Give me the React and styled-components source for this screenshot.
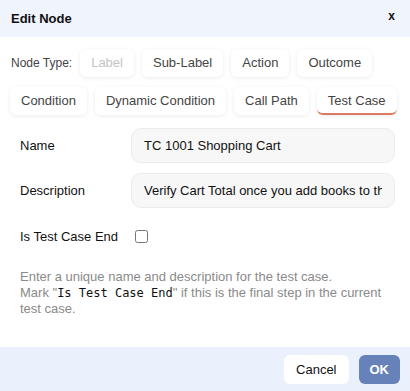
import { useState } from "react";
import styled, { createGlobalStyle } from "styled-components";

const GlobalStyle = createGlobalStyle`
  html, body {
    margin: 0;
    padding: 0;
    background: #ffffff;
  }
  body {
    font-family: "Liberation Sans", Arial, sans-serif;
    color: #222;
  }
`;

const NODE_TYPES = [
  "Label",
  "Sub-Label",
  "Action",
  "Outcome",
  "Condition",
  "Dynamic Condition",
  "Call Path",
  "Test Case",
];

export default function App() {
  const [type, setType] = useState("Test Case");
  const [name, setName] = useState("TC 1001 Shopping Cart");
  const [desc, setDesc] = useState("Verify Cart Total once you add books to the cart");
  const [isEnd, setIsEnd] = useState(false);

  return (
    <>
      <GlobalStyle />
      <Dialog>
        <Header>
          <Title>Edit Node</Title>
          <CloseButton>x</CloseButton>
        </Header>
        <Body>
          <TypeBar>
            <TypeLabel>Node Type:</TypeLabel>
            {NODE_TYPES.map((t) => (
              <TypeButton
                key={t}
                $active={type === t}
                $disabled={t === "Label"}
                onClick={() => t !== "Label" && setType(t)}
              >
                {t}
              </TypeButton>
            ))}
          </TypeBar>
          <Form>
            <FieldRow>
              <FieldLabel>Name</FieldLabel>
              <TextInput value={name} onChange={(e) => setName(e.target.value)} />
            </FieldRow>
            <FieldRow>
              <FieldLabel>Description</FieldLabel>
              <TextInput value={desc} onChange={(e) => setDesc(e.target.value)} />
            </FieldRow>
            <CheckRow>
              <FieldLabel $auto>Is Test Case End</FieldLabel>
              <CheckBox checked={isEnd} onChange={() => setIsEnd(!isEnd)} />
            </CheckRow>
          </Form>
          <Help>
            Enter a unique name and description for the test case.
            <br />
            Mark "<Code>Is Test Case End</Code>" if this is the final step in the current test case.
          </Help>
        </Body>
        <Footer>
          <CancelButton>Cancel</CancelButton>
          <OkButton>OK</OkButton>
        </Footer>
      </Dialog>
    </>
  );
}

const Dialog = styled.div`
  width: 410px;
  height: 391px;
  display: flex;
  flex-direction: column;
  background: #fff;
  overflow: hidden;
`;

const Header = styled.div`
  height: 37px;
  flex: none;
  display: flex;
  align-items: center;
  justify-content: space-between;
  padding: 0 15px 0 11px;
  background: #f0f5fd;
  box-sizing: border-box;
`;

const Title = styled.h2`
  margin: 0;
  font-size: 13px;
  font-weight: 700;
  color: #111;
`;

const CloseButton = styled.button`
  border: none;
  background: none;
  padding: 0;
  margin-top: -6px;
  font-family: inherit;
  font-size: 12px;
  font-weight: 700;
  color: #111;
  cursor: pointer;
`;

const Body = styled.div`
  flex: 1;
  padding: 12px 10px 0 10px;
`;

const TypeBar = styled.div`
  display: flex;
  flex-wrap: wrap;
  align-items: center;
  gap: 10px 8px;
`;

const TypeLabel = styled.span`
  font-size: 12px;
  color: #444;
  padding-left: 1px;
`;

const TypeButton = styled.button`
  height: 28px;
  padding: 0 11px;
  border: none;
  border-radius: 6px;
  background: #fff;
  font-family: inherit;
  font-size: 13px;
  color: ${(p) => (p.$disabled ? "#c4c4c4" : "#444")};
  box-shadow: 0 1px 4px rgba(0, 0, 0, 0.08);
  border-bottom: 2px solid ${(p) => (p.$active ? "#dd7a62" : "transparent")};
  cursor: ${(p) => (p.$disabled ? "default" : "pointer")};
`;

const Form = styled.div`
  display: flex;
  flex-direction: column;
  gap: 10px;
  margin-top: 13px;
  padding: 0 5px 0 10px;
`;

const FieldRow = styled.div`
  display: flex;
  align-items: center;
`;

const CheckRow = styled.div`
  display: flex;
  align-items: center;
  margin-top: 11px;
`;

const FieldLabel = styled.label`
  width: ${(p) => (p.$auto ? "auto" : "111px")};
  flex: none;
  font-size: 13px;
  color: #111;
`;

const TextInput = styled.input`
  flex: 1;
  min-width: 0;
  height: 35px;
  box-sizing: border-box;
  padding: 0 12px;
  border: 1px solid #ececec;
  border-radius: 10px;
  background: #f7f7f7;
  font-family: inherit;
  font-size: 13px;
  color: #111;
  outline: none;
`;

const CheckBox = styled.input.attrs({ type: "checkbox" })`
  width: 13px;
  height: 13px;
  margin: 0 0 0 17px;
`;

const Help = styled.p`
  margin: 25px 10px 0 10px;
  font-size: 13px;
  line-height: 16px;
  color: #8a8a8a;
`;

const Code = styled.code`
  font-family: "DejaVu Sans Mono", "Liberation Mono", monospace;
  font-size: 12px;
  color: #111;
`;

const Footer = styled.div`
  height: 44px;
  flex: none;
  display: flex;
  align-items: center;
  justify-content: flex-end;
  gap: 10px;
  padding: 0 10px;
  background: #eaf1fc;
`;

const CancelButton = styled.button`
  height: 29px;
  padding: 0 12px;
  border: none;
  border-radius: 6px;
  background: #fff;
  font-family: inherit;
  font-size: 13px;
  color: #111;
  cursor: pointer;
`;

const OkButton = styled.button`
  height: 29px;
  padding: 0 11px;
  border: none;
  border-radius: 6px;
  background: #6782b8;
  font-family: inherit;
  font-size: 13px;
  font-weight: 700;
  color: #fff;
  cursor: pointer;
`;
